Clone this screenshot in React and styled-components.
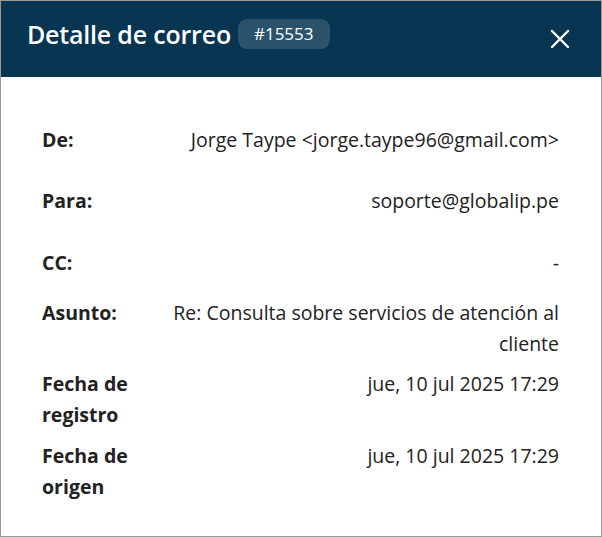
import React from "react";
import styled, { createGlobalStyle } from "styled-components";

const GlobalStyle = createGlobalStyle`
    html, body {
        margin: 0;
        padding: 0;
        background: #ffffff;
    }
    body {
        font-family: "Open Sans", "Noto Sans", sans-serif;
    }
`;

const fields = [
    { label: "De:", value: "Jorge Taype <jorge.taype96@gmail.com>", space: 30 },
    { label: "Para:", value: "soporte@globalip.pe", space: 31 },
    { label: "CC:", value: "-", space: 19 },
    { label: "Asunto:", value: "Re: Consulta sobre servicios de atención al cliente", space: 9 },
    { label: "Fecha de registro", value: "jue, 10 jul 2025 17:29", space: 10 },
    { label: "Fecha de origen", value: "jue, 10 jul 2025 17:29", space: 0 },
];

const App = () => {
    return (
        <>
            <GlobalStyle />
            <Modal>
                <Header>
                    <TitleGroup>
                        <Title>Detalle de correo</Title>
                        <Badge>#15553</Badge>
                    </TitleGroup>
                    <CloseButton aria-label="Cerrar">
                        <svg width="20" height="20" viewBox="0 0 20 20">
                            <path
                                d="M2 2 L18 18 M18 2 L2 18"
                                stroke="#ffffff"
                                strokeWidth="2.4"
                                strokeLinecap="round"
                            />
                        </svg>
                    </CloseButton>
                </Header>
                <Body>
                    {fields.map((f) => (
                        <Row key={f.label} $space={f.space}>
                            <Label>{f.label}</Label>
                            <Value>{f.value}</Value>
                        </Row>
                    ))}
                </Body>
            </Modal>
        </>
    );
};

export default App;

const Modal = styled.div`
    width: 602px;
    height: 537px;
    box-sizing: border-box;
    border: 1px solid #9a9a9a;
    background: #ffffff;
    display: flex;
    flex-direction: column;
    overflow: hidden;
`;

const Header = styled.div`
    height: 76px;
    box-sizing: border-box;
    background: #073552;
    display: flex;
    align-items: flex-start;
    justify-content: space-between;
    padding: 18px 31px 0 26px;
    flex-shrink: 0;
`;

const TitleGroup = styled.div`
    display: flex;
    align-items: center;
    gap: 7px;
`;

const Title = styled.h1`
    margin: 0;
    font-size: 25px;
    line-height: 30px;
    font-weight: 600;
    color: #ffffff;
    letter-spacing: -0.2px;
`;

const Badge = styled.span`
    background: rgba(255, 255, 255, 0.15);
    color: #ffffff;
    font-size: 17px;
    border-radius: 9px;
    padding: 4px 16px;
    line-height: 22px;
`;

const CloseButton = styled.button`
    background: none;
    border: none;
    padding: 0;
    cursor: pointer;
    display: flex;
    align-self: center;
    margin-top: -18px;
`;

const Body = styled.div`
    padding: 47px 42px 0 41px;
    display: flex;
    flex-direction: column;
`;

const Row = styled.div`
    display: grid;
    grid-template-columns: 120px 1fr;
    column-gap: 10px;
    margin-bottom: ${(p) => p.$space}px;
    font-size: 19.5px;
    line-height: 31px;
    color: #222222;
`;

const Label = styled.div`
    font-weight: 700;
`;

const Value = styled.div`
    text-align: right;
`;
